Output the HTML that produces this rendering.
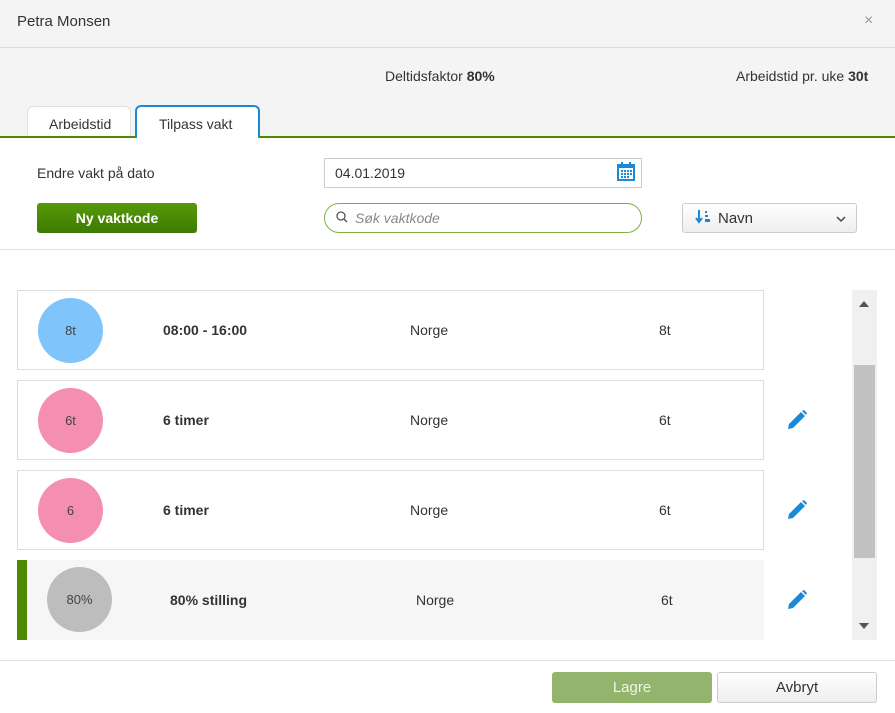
<!DOCTYPE html>
<html><head><meta charset="utf-8"><style>
*{box-sizing:border-box;margin:0;padding:0}
body{width:895px;height:713px;background:#fff;font-family:"Liberation Sans",sans-serif;font-size:14px;color:#333;position:relative;overflow:hidden}
.a{position:absolute}
.row{position:absolute;left:17px;width:747px;height:80px;border:1px solid #ddd;background:#fff}
.c{position:absolute;width:65px;height:65px;border-radius:50%;top:7px;left:20px;text-align:center;line-height:65px;font-size:13px;color:#444}
.t{position:absolute;top:31px;font-size:14px}
.pen{position:absolute;left:786px}
</style></head><body>
<div class="a" style="left:0;top:0;width:895px;height:137px;background:#f4f4f4"></div>
<div class="a" style="left:0;top:47px;width:895px;height:1px;background:#ddd"></div>
<div class="a" style="left:17px;top:13px;font-size:15px;color:#333">Petra Monsen</div>
<div class="a" style="left:864px;top:12px;font-size:16px;color:#999">×</div>
<div class="a" style="left:385px;top:68px">Deltidsfaktor <b>80%</b></div>
<div class="a" style="left:736px;top:68px">Arbeidstid pr. uke <b>30t</b></div>
<div class="a" style="left:27px;top:106px;width:104px;height:32px;background:#fff;border:1px solid #e2e2e2;border-bottom:none;border-radius:6px 6px 0 0;transform:perspective(40px) rotateX(0deg)"></div>
<div class="a" style="left:49px;top:116px">Arbeidstid</div>
<div class="a" style="left:0;top:136px;width:895px;height:2px;background:#4e8a00"></div>
<div class="a" style="left:135px;top:105px;width:125px;height:33px;background:#fff;border:2px solid #1a8ad8;border-bottom:none;border-radius:6px 6px 0 0"></div>
<div class="a" style="left:159px;top:116px">Tilpass vakt</div>
<div class="a" style="left:37px;top:165px">Endre vakt på dato</div>
<div class="a" style="left:324px;top:158px;width:318px;height:30px;border:1px solid #ccc;background:#fff"></div>
<div class="a" style="left:335px;top:165px">04.01.2019</div>
<svg class="a" style="left:617px;top:161px" width="18" height="20" viewBox="0 0 18 20"><rect x="1" y="4" width="16" height="15" fill="none" stroke="#1a8ad8" stroke-width="2"/><rect x="1" y="4" width="16" height="3" fill="#1a8ad8"/><rect x="4" y="1" width="2" height="5" fill="#1a8ad8"/><rect x="12" y="1" width="2" height="5" fill="#1a8ad8"/><g fill="#1a8ad8"><rect x="4" y="9" width="2" height="2"/><rect x="7" y="9" width="2" height="2"/><rect x="10" y="9" width="2" height="2"/><rect x="13" y="9" width="2" height="2"/><rect x="4" y="12" width="2" height="2"/><rect x="7" y="12" width="2" height="2"/><rect x="10" y="12" width="2" height="2"/><rect x="13" y="12" width="2" height="2"/><rect x="4" y="15" width="2" height="2"/><rect x="7" y="15" width="2" height="2"/><rect x="10" y="15" width="2" height="2"/></g></svg>
<div class="a" style="left:37px;top:203px;width:160px;height:30px;background:linear-gradient(#559a0a,#3f7a00);border-radius:3px;color:#fff;font-weight:bold;text-align:center;line-height:30px">Ny vaktkode</div>
<div class="a" style="left:324px;top:203px;width:318px;height:30px;border:1px solid #7ab33f;border-radius:15px;background:#fff"></div>
<svg class="a" style="left:336px;top:211px" width="12" height="12"><circle cx="5" cy="5" r="4" fill="none" stroke="#555" stroke-width="1.3"/><line x1="8" y1="8" x2="11" y2="11" stroke="#555" stroke-width="1.5"/></svg>
<div class="a" style="left:355px;top:210px;font-style:italic;color:#888">Søk vaktkode</div>
<div class="a" style="left:682px;top:203px;width:175px;height:30px;border:1px solid #ccc;border-radius:3px;background:linear-gradient(#fff,#eee)"></div>
<svg class="a" style="left:695px;top:209px" width="16" height="16"><path d="M4 1v11M1 9l3 4 3-4" stroke="#1a8ad8" stroke-width="2" fill="none"/><rect x="10" y="2" width="2" height="2" fill="#1a8ad8"/><rect x="10" y="6" width="3" height="2" fill="#1a8ad8"/><rect x="10" y="10" width="5" height="3" fill="#1a8ad8"/></svg>
<div class="a" style="left:718px;top:210px;font-size:15px">Navn</div>
<svg class="a" style="left:836px;top:215px" width="10" height="8"><path d="M1 2l4 4 4-4" stroke="#444" stroke-width="1.5" fill="none"/></svg>
<div class="a" style="left:0;top:249px;width:895px;height:1px;background:#ddd"></div>

<div class="row" style="top:290px"><div class="c" style="background:#7fc4fb">8t</div><div class="t" style="left:145px;font-weight:bold">08:00 - 16:00</div><div class="t" style="left:392px">Norge</div><div class="t" style="left:641px">8t</div></div>
<div class="row" style="top:380px"><div class="c" style="background:#f48fb1">6t</div><div class="t" style="left:145px;font-weight:bold">6 timer</div><div class="t" style="left:392px">Norge</div><div class="t" style="left:641px">6t</div></div>
<div class="row" style="top:470px"><div class="c" style="background:#f48fb1">6</div><div class="t" style="left:145px;font-weight:bold">6 timer</div><div class="t" style="left:392px">Norge</div><div class="t" style="left:641px">6t</div></div>
<div class="row" style="top:560px;background:#f6f6f6;border:none;border-left:10px solid #4e8a00"><div class="c" style="background:#bdbdbd;left:20px;top:7px">80%</div><div class="t" style="left:143px;top:32px;font-weight:bold">80% stilling</div><div class="t" style="left:389px;top:32px">Norge</div><div class="t" style="left:634px;top:32px">6t</div></div>

<svg class="pen" style="top:409px" width="22" height="22" viewBox="0 0 22 22"><path d="M2 20l1-5L15 3l4 4L7 19z" fill="#1a8ad8"/><path d="M16 2l2-1 3 3-1 2z" fill="#1a8ad8"/></svg>
<svg class="pen" style="top:499px" width="22" height="22" viewBox="0 0 22 22"><path d="M2 20l1-5L15 3l4 4L7 19z" fill="#1a8ad8"/><path d="M16 2l2-1 3 3-1 2z" fill="#1a8ad8"/></svg>
<svg class="pen" style="top:589px" width="22" height="22" viewBox="0 0 22 22"><path d="M2 20l1-5L15 3l4 4L7 19z" fill="#1a8ad8"/><path d="M16 2l2-1 3 3-1 2z" fill="#1a8ad8"/></svg>

<div class="a" style="left:852px;top:290px;width:25px;height:350px;background:#f0f0f0"></div>
<div class="a" style="left:854px;top:365px;width:21px;height:193px;background:#c1c1c1"></div>
<svg class="a" style="left:858px;top:300px" width="12" height="8"><path d="M1 7l5-6 5 6z" fill="#555"/></svg>
<svg class="a" style="left:858px;top:622px" width="12" height="8"><path d="M1 1l5 6 5-6z" fill="#555"/></svg>

<div class="a" style="left:0;top:660px;width:895px;height:1px;background:#ddd"></div>
<div class="a" style="left:552px;top:672px;width:160px;height:31px;background:#93b46c;border-radius:3px;color:#eef5e4;text-align:center;line-height:31px;font-size:15px">Lagre</div>
<div class="a" style="left:717px;top:672px;width:160px;height:31px;border:1px solid #ccc;border-radius:3px;background:linear-gradient(#fff,#eee);text-align:center;line-height:29px;font-size:15px">Avbryt</div>
</body></html>
